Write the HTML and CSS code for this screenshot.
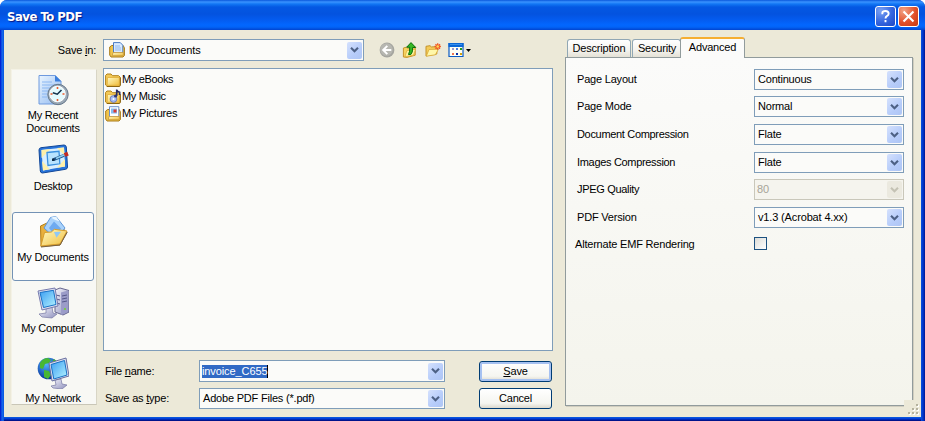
FILE: index.html
```html
<!DOCTYPE html>
<html lang="en">
<head>
<meta charset="utf-8">
<title>Save To PDF</title>
<link rel="stylesheet" href="styles.css">
</head>
<body>
<svg width="0" height="0" class="defs" aria-hidden="true">
  <defs>
    <linearGradient id="gFolder" x1="0" y1="0" x2="1" y2="1"><stop offset="0" stop-color="#fffac4"/><stop offset="1" stop-color="#f0bd3c"/></linearGradient>
    <linearGradient id="gScreen" x1="0" y1="0" x2="1" y2="1"><stop offset="0" stop-color="#3a9df2"/><stop offset="1" stop-color="#b5f4ff"/></linearGradient>
    <linearGradient id="gPage" x1="0" y1="0" x2="1" y2="1"><stop offset="0" stop-color="#eaf5ff"/><stop offset="1" stop-color="#8fb8f0"/></linearGradient>
    <linearGradient id="gMetal" x1="0" y1="0" x2="1" y2="1"><stop offset="0" stop-color="#f6f6fc"/><stop offset="1" stop-color="#8e90bd"/></linearGradient>
    <radialGradient id="gGlobe" cx=".4" cy=".3" r=".7"><stop offset="0" stop-color="#54b4ff"/><stop offset="1" stop-color="#06339b"/></radialGradient>
    <symbol id="chev" viewBox="0 0 9 6"><path d="M1 .8 4.5 4.3 8 .8" fill="none" stroke="currentColor" stroke-width="2.1"/></symbol>
    <symbol id="folder" viewBox="0 0 16 16"><path d="M.6 13V3.4L2 2h4l1.6 1.7h6L15 5v8.2l-1 1.2H2z" fill="#f3c958" stroke="#b08019"/><path d="M2.5 5.5h11.8v7.8H2.2z" fill="url(#gFolder)" stroke="#e2ae39" stroke-width=".8"/><path d="M2 14.5h12.6l.8-1.3V5.5" fill="none" stroke="#8c640f"/></symbol>
  </defs>
</svg>
<div class="window">
  <header class="titlebar">
    <h1>Save To PDF</h1>
    <button class="cap help" aria-label="Help"><svg viewBox="0 0 21 21"><path d="M7 8V6.4Q7.2 4.5 10.3 4.5 14 4.5 14 7.4q0 1.6-2 2.7-1.5.8-1.5 2.7M10.5 14.5v2.3" fill="none" stroke="#fff" stroke-width="2.1"/></svg></button>
    <button class="cap close" aria-label="Close"><svg viewBox="0 0 21 21"><path d="m5 5 11 11m0-11-11 11" stroke="#fff" stroke-width="2.3"/></svg></button>
  </header>
  <main class="content">
    <section class="browser">
      <div class="lookin">
        <span class="lookin-label">Save <u>i</u>n:</span>
        <div class="combo">
          <svg class="ico16" viewBox="0 0 16 16"><path d="M.7 13V5l2-1.5h11.5L15.4 6v7.5L14 15H2z" fill="#f0c44c" stroke="#a97a18"/><path d="M4.5.6h6.8l2.5 2.6V11h-9.3z" fill="#d9eaff" stroke="#4c7cc4"/><path d="M6 4h5M6 6h6M6 8h6" stroke="#91b9ef"/><path d="M4 10.5h10.3v3.2H3.2z" fill="url(#gFolder)" stroke="#c6983a" stroke-width=".8"/></svg>
          <span>My Documents</span><i class="drop"><svg><use href="#chev"/></svg></i>
        </div>
        <nav class="tools">
          <svg viewBox="0 0 16 16"><circle cx="8" cy="8" r="7.4" fill="#a5a59f"/><circle cx="7.5" cy="7.5" r="6.3" fill="#b7b7b1"/><path d="M12.3 8H4.5M8.3 3.9 4.2 8l4.1 4.1" fill="none" stroke="#fff" stroke-width="2"/></svg>
          <svg viewBox="0 0 16 16"><path d="M1.4 15V6l3-.8 1.4 1 7.4-1.4v8.4L5 15.4z" fill="#f7d260" stroke="#c5932a"/><path d="M3 14.6 4.8 8.7l8.7-1.5-2 6z" fill="#fff4a0" stroke="#dba935" stroke-width=".7"/><path d="M6.5 12.5h2.3Q10.7 11 10.7 5.5h3L9 .6 4.7 5.2h3q.3 4.5-1.2 7.3z" fill="#36b825" stroke="#0a6e0c"/></svg>
          <svg viewBox="0 0 16 16"><path d="M1 14V4.3l4-.6 1.4 1.2 5.4-.2V12z" fill="#f4cb58" stroke="#c4932b"/><path d="M1.3 14.2 4 7.5l9.4-.3-3 5.6z" fill="#fff7a9" stroke="#d9a834" stroke-width=".8"/><path d="M12.7 1.3v6.4M9.5 4.5h6.4M10.5 2.3l4.5 4.5m0-4.5-4.5 4.5" stroke="#ef5722" stroke-width="1.3"/><circle cx="12.7" cy="4.5" r="1.3" fill="#ffd658"/></svg>
          <svg class="views" viewBox="0 0 23 16"><path d="M1 1.5h14v13H1z" fill="#fffef3" stroke="#0a5ac4" stroke-width="1.2"/><path d="M.5 1h15v4H.5z" fill="#0b67d6"/><path d="M2 2h12v1H2z" fill="#3991ec"/><path d="M4 6h2v2H4z" fill="#a09bcc"/><path d="M8 6h2v2H8z" fill="#4a7de3"/><path d="M12 6h2v2h-2z" fill="#219921"/><path d="M4 11h2v2H4z" fill="#ef7550"/><path d="M8 11h2v2H8z" fill="#0b2fa5"/><path d="M12 11h2v2h-2z" fill="#d5a20c"/><path d="M18 7h5l-2.5 3z"/></svg>
        </nav>
      </div>
      <div class="panes">
        <aside class="places">
          <div class="place recent">
            <svg viewBox="0 0 32 32"><path d="M2 1.5h16l6 6V30H2z" fill="url(#gPage)" stroke="#6f9ade"/><path d="m18 1 6.5 6.5H18z" fill="#3d7fdc"/><path d="M5 8h10M5 11h13M5 14h9M5 17h6M5 20h5M5 23h5" stroke="#8ab7f2"/><circle cx="21" cy="20.5" r="10.2" fill="#9ba9b6" stroke="#657789"/><circle cx="20.5" cy="20" r="7.8" fill="#e4fbff" stroke="#fff"/><path d="M20.5 13v2m0 10v2M13.5 20h2m10 0h2" stroke="#ef5b2c" stroke-width="1.6"/><path d="m24.5 16-4.2 4.2-4.5-1.5" fill="none" stroke="#16344d" stroke-width="1.6"/></svg>
            <span>My Recent<br>Documents</span>
          </div>
          <div class="place desktop">
            <svg viewBox="0 0 32 32"><path d="M2 7Q2 5 4 4.7L27 2q2 0 2.3 2l1.2 20q0 2-2 2.3L5.5 30q-2 0-2.2-2z" fill="#2874da" stroke="#114798"/><path d="M4.5 7 27 4.5l1 19L6 27.5z" fill="#d9efff"/><path d="m4.5 7 9-1-9 9zM20 5l7-.5.6 8zM5 18l8 8.2-7 1.3zM28 16v7.5l-8 1.3z" fill="#fff0a9"/><path d="m10 9.5 12-1.2.8 12.5-11.8 1.6z" fill="#b9e4ff" stroke="#3b91df" stroke-width="1.3"/><path d="m16.5 16.7 10.5-4.4" stroke="#23588c" stroke-width="3"/><path d="m19 15.5 8-3.4" stroke="#92cff0" stroke-width="1.6"/><path d="m27.5 12 3.5-1.4" stroke="#c42a22" stroke-width="4"/><path d="M15 15.5h2.4v2.4H15z" fill="#102d48"/></svg>
            <span>Desktop</span>
          </div>
          <div class="place docs selected">
            <svg viewBox="0 0 32 32"><path d="M3.5 10 10 7l3 3 13 2 3.5 5L23 29 4 30.5z" fill="#e8b03d" stroke="#b27c16"/><path d="m7 12 6.5-10.5L19 .5l9 11.5-9 11z" fill="#a9d2fb" stroke="#5e97da"/><path d="m12 12 5-6.5 7 7-6 8z" fill="#6eaaf0"/><path d="m14 1.5 5-1 3.7 5-5.5-2z" fill="#e9f6ff"/><path d="m3.8 30 3.7-13.5 6.8-.5 3-2.7L30 15l-7 13z" fill="url(#gFolder)" stroke="#d69d2c"/><path d="m17 16 7-.3-4.5 6z" fill="#8fc8f7"/><path d="m4 31 19-2 7.3-13" fill="none" stroke="#756147"/></svg>
            <span>My Documents</span>
          </div>
          <div class="place computer">
            <svg viewBox="0 0 32 32"><path d="m18 3 5-2 9 2.5V25l-6 3-8-3z" fill="url(#gMetal)" stroke="#66668e"/><path d="m24 5.5 7-2V25l-7 3z" fill="#9b9cc8"/><path d="m19 8 4 1m-4 3 4 1m-4 3 4 1m2-8 5-1m-5 4 5-1m-5 4 5-1" stroke="#56588a"/><path d="m9 21 6-1 1 6 4 1-5 4-10-1-3-3 7-1z" fill="url(#gMetal)" stroke="#7778a4" stroke-width=".7"/><path d="m1 4 17-3 3 18-16 4z" fill="#dfe0ef" stroke="#777baf"/><path d="m3 5.5 13.5-2.2L19 17.5 6.5 20.5z" fill="url(#gScreen)" stroke="#1971c6"/><circle cx="28" cy="22" r="1" fill="#71d728"/></svg>
            <span>My Computer</span>
          </div>
          <div class="place network">
            <svg viewBox="0 0 32 32"><circle cx="11.5" cy="11.5" r="10.8" fill="url(#gGlobe)"/><path d="M3 6Q6 1 11 1l3 2-2 3-4 1-2 5-3-1zm4 7 5 1 2 4-3 4-4-2zM17 2q4 2 5 7l-4-1-3-3z" fill="#48b733"/><path d="m18 23 6-1 1 5 5 1-5 4-9-1-2-2 5-1z" fill="url(#gMetal)" stroke="#7778a4" stroke-width=".7"/><path d="m12 6 17-5 3 18-17 5z" fill="#dfe0ef" stroke="#696f9f"/><path d="m14 7.5 13.5-4L30 18l-13.2 4z" fill="url(#gScreen)" stroke="#1971c6"/></svg>
            <span>My Network</span>
          </div>
        </aside>
        <div class="right">
          <ul class="files">
            <li><svg class="ico16"><use href="#folder"/></svg><span>My eBooks</span></li>
            <li><svg class="ico16" viewBox="0 0 16 16"><use href="#folder"/><circle cx="8.5" cy="10" r="3.4" fill="#a9bdf3" stroke="#6270b3" stroke-width=".8"/><circle cx="8.5" cy="10" r="1" fill="#fff"/><path d="M11.7 7V.5q.3 2 3 2.8V6" fill="none" stroke="#272c66" stroke-width="1.6"/><circle cx="10.6" cy="7" r="1.6" fill="#303775"/></svg><span>My Music</span></li>
            <li><svg class="ico16" viewBox="0 0 16 16"><path d="M.7 13V5l2-1.5h11.5L15.4 6v7.5L14 15H2z" fill="#f0c44c" stroke="#a97a18"/><path d="M4.5.7h9.3V11H4.5z" fill="#fff" stroke="#6b8fcb"/><path d="M6 2.5h6v5H6z" fill="#83bdf3"/><path d="M8.5 3.5h3v3h-3z" fill="#db3b30"/><path d="M4 10.5h10.3v3.2H3.2z" fill="url(#gFolder)" stroke="#c6983a" stroke-width=".8"/></svg><span class="pics">My Pictures</span></li>
          </ul>
          <div class="form">
            <label class="fn">File <u>n</u>ame:</label>
            <div class="combo name"><span class="sel">invoice_C655</span><i class="drop"><svg><use href="#chev"/></svg></i></div>
            <button class="btn default"><span><u>S</u>ave</span></button>
            <label class="ft">Save as <u>t</u>ype:</label>
            <div class="combo type"><span>Adobe PDF Files (*.pdf)</span><i class="drop"><svg><use href="#chev"/></svg></i></div>
            <button class="btn"><span>Cancel</span></button>
          </div>
        </div>
      </div>
    </section>
    <section class="options">
      <div class="tabs"><div class="tab t-desc"><span>Description</span></div><div class="tab t-sec"><span>Security</span></div><div class="tab active"><span>Advanced</span></div></div>
      <div class="panel">
        <label>Page Layout</label><div class="combo"><span>Continuous</span><i class="drop"><svg><use href="#chev"/></svg></i></div>
        <label>Page Mode</label><div class="combo"><span>Normal</span><i class="drop"><svg><use href="#chev"/></svg></i></div>
        <label class="tight">Document Compression</label><div class="combo"><span>Flate</span><i class="drop"><svg><use href="#chev"/></svg></i></div>
        <label class="tight">Images Compression</label><div class="combo"><span>Flate</span><i class="drop"><svg><use href="#chev"/></svg></i></div>
        <label class="tight">JPEG Quality</label><div class="combo disabled"><span>80</span><i class="drop"><svg><use href="#chev"/></svg></i></div>
        <label>PDF Version</label><div class="combo ver"><span>v1.3 (Acrobat 4.xx)</span><i class="drop"><svg><use href="#chev"/></svg></i></div>
        <label class="emf">Alternate EMF Rendering</label><div class="check"></div>
      </div>
      <svg class="grip" viewBox="0 0 16 16"><g fill="#fff"><path d="M13 5h2v2h-2zM9 9h2v2H9zM13 9h2v2h-2zM5 13h2v2H5zM9 13h2v2H9zM13 13h2v2h-2z"/></g><g fill="#b5b29e"><path d="M12 4h2v2h-2zM8 8h2v2H8zM12 8h2v2h-2zM4 12h2v2H4zM8 12h2v2H8zM12 12h2v2h-2z"/></g></svg>
    </section>
  </main>
</div>
</body>
</html>
```
FILE: styles.css
```css
* { box-sizing: border-box; }
body {
  margin: 0;
  background: #fff;
  color: #000;
  font: 11px/13px "Liberation Sans", Arial, sans-serif;
  letter-spacing: -0.2px;
}
button { font: inherit; letter-spacing: inherit; padding: 0; }
svg { display: block; flex: none; }
.defs { position: absolute; }
.window {
  width: 925px;
  height: 421px;
  display: flex;
  flex-direction: column;
  overflow: hidden;
  border-radius: 7px 7px 0 0;
  background: linear-gradient(90deg, #0019cf 0, #0831d9 1px, #166aee 2px, #0855dd 4px, #0855dd 921px, #0441d8 922px, #0029b5 924px, #00138c 925px);
}
.titlebar {
  height: 30px;
  flex: none;
  display: flex;
  align-items: center;
  gap: 2px;
  padding: 3px 6px 0 7px;
  background: linear-gradient(#0a58dc 0, #3a93ff 2px, #1277f4 4px, #0458e3 7px, #0453df 14px, #045cf0 20px, #0267ff 25px, #0264f8 27px, #0144cf 30px);
}
h1 {
  flex: 1;
  margin: 0;
  color: #fff;
  font: bold 13px/18px "DejaVu Sans Condensed", "Liberation Sans", sans-serif;
  letter-spacing: -0.5px;
  text-shadow: 1px 1px 1px #0a1883;
}
.cap {
  width: 21px;
  height: 21px;
  border: 1px solid #fff;
  border-radius: 3px;
  background: radial-gradient(circle at 25% 20%, #7ba1f2, #3566df 55%, #1c46c4);
}
.cap svg { width: 19px; height: 19px; }
.cap.close { background: radial-gradient(circle at 25% 20%, #f2a285, #e2512b 55%, #c43812); }
.content {
  height: 387px;
  margin: 0 4px 0;
  display: flex;
  gap: 12px;
  background: #ece9d8;
  box-shadow: 0 1px #0855dd, 0 2px #0441d8, 0 3px #0029b5, 0 4px #00138c;
}
.browser { width: 549px; padding: 9px 0 0 7px; }
.lookin { display: flex; height: 22px; align-items: center; }
.lookin-label { width: 92px; padding-right: 7px; text-align: right; }
.lookin .combo { width: 261px; height: 22px; gap: 4px; padding-left: 5px; }
.lookin .combo span { letter-spacing: -0.15px; }
.combo {
  height: 21px;
  display: flex;
  align-items: center;
  justify-content: space-between;
  padding: 0 1px 0 3px;
  border: 1px solid #7f9db9;
  background: #fbfbf9;
  white-space: nowrap;
}
.combo .ico16 + span { margin-right: auto; }
.drop {
  width: 15px;
  height: 17px;
  flex: none;
  display: grid;
  place-items: center;
  border-radius: 2px;
  background: linear-gradient(135deg, #d5e1fd, #b6ccfa 60%, #aec5f4);
  color: #4d6185;
}
.drop svg { width: 9px; height: 6px; }
.ico16 { width: 16px; height: 16px; }
.tools { display: flex; gap: 7px; padding-left: 15px; }
.tools svg { width: 16px; height: 16px; }
.tools .views { width: 23px; }
.panes { display: flex; gap: 6px; padding-top: 7px; }
.places {
  width: 86px;
  height: 336px;
  margin-top: 1px;
  padding: 0 2px 0 0;
  border: 1px solid #f4f2e6;
  border-right-color: #d8d5c5;
  border-bottom-color: #c9c6b7;
  background: #f8f8f4;
}
.place {
  display: flex;
  flex-direction: column;
  align-items: center;
  height: 71px;
  text-align: center;
  border: 1px solid transparent;
  border-radius: 3px;
  white-space: nowrap;
}
.place svg { width: 32px; height: 32px; margin: 3px 0; }
.place span { letter-spacing: -0.25px; }
.place.recent { height: 70px; }
.place.desktop svg { margin-top: 2px; margin-bottom: 5px; }
.place.docs { height: 69px; margin: 1px 0 2px; background: #fcfcfb; border-color: #7392b5; }
.place.docs span { letter-spacing: -0.15px; }
.place.network { height: 50px; }
.place.network svg { margin-top: 2px; }
.right { width: 450px; }
.files {
  height: 283px;
  margin: 0;
  padding: 2px 1px;
  list-style: none;
  border: 1px solid #7f9db9;
  background: #fbfbf9;
  letter-spacing: -0.35px;
}
.files .pics { letter-spacing: -0.2px; }
.files li { display: flex; align-items: center; gap: 1px; height: 17px; }
.form {
  display: grid;
  grid-template-columns: 94px 246px 73px;
  grid-template-rows: 22px 21px;
  column-gap: 0;
  row-gap: 6px;
  padding: 9px 0 0 2px;
  align-items: center;
}
.form .combo { height: 100%; }
.form .btn { margin-left: 34px; }
.form .combo.name { padding-left: 2px; }
.sel { background: #316ac5; color: #fff; border-right: 1px solid #000; letter-spacing: -0.1px; }
.btn {
  width: 73px;
  height: 21px;
  border: 1px solid #003c74;
  border-radius: 3px;
  background: linear-gradient(#fff, #f5f5f0 75%, #dcd8cc);
  color: #000;
}
.btn.default { box-shadow: inset 0 0 0 2px #a6c1f1; }
.options { width: 348px; padding-top: 7px; }
.tabs { height: 20px; display: flex; align-items: flex-end; padding-left: 2px; }
.tab {
  height: 18px;
  padding-top: 2px;
  text-align: center;
  border: 1px solid #91a7b4;
  border-bottom: 0;
  border-radius: 3px 3px 0 0;
  background: linear-gradient(#fff, #f4f3ee 60%, #e4e1d6);
}
.t-desc { width: 64px; margin-right: 1px; }
.t-sec { width: 49px; padding-left: 1px; }
.tab.active {
  position: relative;
  width: 65px;
  height: 21px;
  margin: 0 0 -1px -1px;
  border-color: #919b9c;
  border-top: 2px solid #f5ae32;
  background: #fbfbfa;
}
.panel {
  height: 349px;
  display: grid;
  grid-template-columns: 188px 150px;
  grid-template-rows: 27px 28px 28px 27px 28px 27px;
  align-content: start;
  align-items: start;
  padding: 11px 0 0;
  border: 1px solid #919b9c;
  background: linear-gradient(#fbfbfa, #f4f4ec);
  box-shadow: 1px 1px #d0cdbf;
}
.panel label { padding: 4px 0 0 11px; white-space: nowrap; }
.panel .tight { letter-spacing: -0.32px; }
.panel .emf { padding-left: 9px; }
.ver span { letter-spacing: -0.15px; }
.combo.disabled { color: #a7a498; border-color: #c9c7ba; background: #f5f4ee; padding-left: 2px; }
.disabled .drop { background: #ebe9df; color: #c4c2b4; }
.check {
  width: 13px;
  height: 13px;
  margin-top: 3px;
  border: 1px solid #1c5180;
  background: linear-gradient(135deg, #dcdcd7, #fff);
}
.grip { position: absolute; left: 904px; top: 400px; width: 16px; height: 16px; background: #ece9d8; }
```
